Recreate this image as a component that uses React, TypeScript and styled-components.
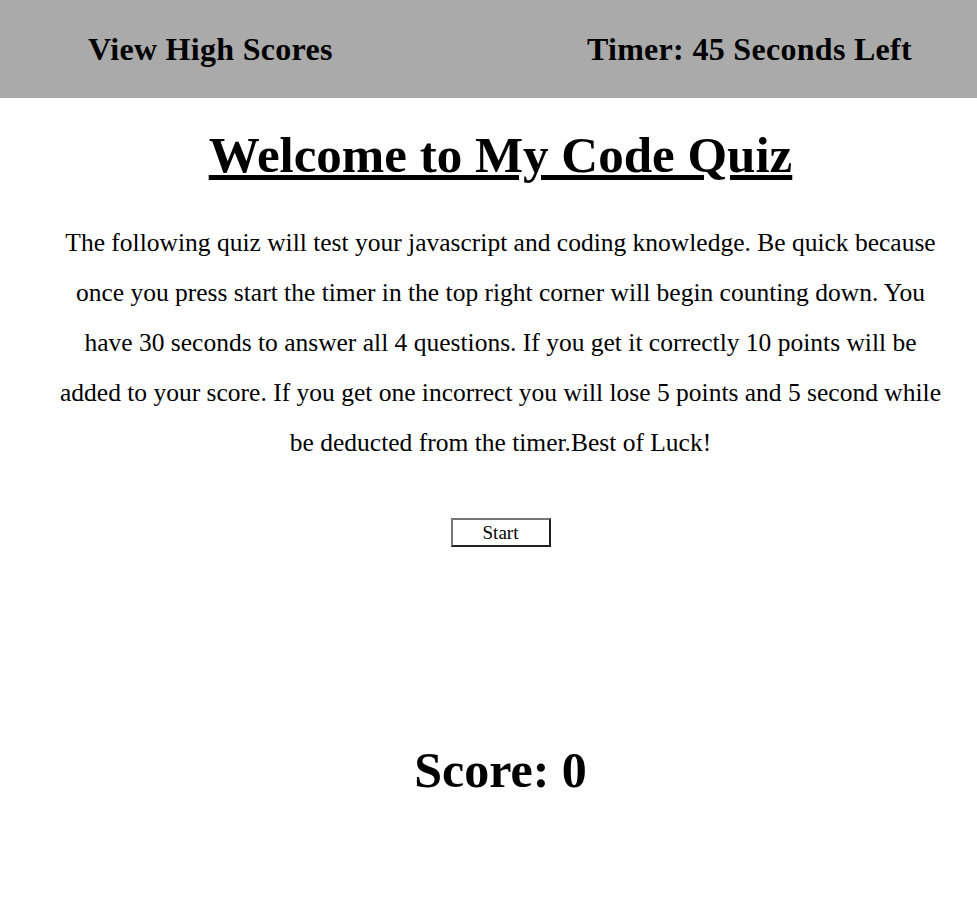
import React from "react";
import styled, { createGlobalStyle } from "styled-components";

const GlobalStyle = createGlobalStyle`
  html, body {
    margin: 0;
    padding: 0;
    background: #fff;
    font-family: "Liberation Serif", "Times New Roman", serif;
    color: #000;
  }
`;

const Header = styled.header`
  display: flex;
  justify-content: space-between;
  align-items: center;
  height: 98px;
  padding: 0 65px 0 88px;
  box-sizing: border-box;
  background-color: #aaaaaa;
`;

const HeaderText = styled.h2`
  margin: 0;
  font-size: 32px;
  letter-spacing: 0.3px;
  font-weight: bold;
`;

const Main = styled.main`
  display: flex;
  flex-direction: column;
  align-items: center;
  padding: 28px 22px 0 46px;
`;

const Title = styled.h1`
  margin: 0;
  font-size: 51px;
  font-weight: bold;
  text-decoration: underline;
  line-height: 58px;
`;

const Intro = styled.p`
  margin: 34px 0 0;
  max-width: 898px;
  font-size: 25.5px;
  line-height: 50px;
  text-align: center;
`;

const StartButton = styled.button`
  margin-top: 50px;
  width: 100px;
  height: 29px;
  font-family: "Liberation Serif", "Times New Roman", serif;
  font-size: 19px;
  background: #fff;
  border: 2px outset #767676;
  padding: 0;
`;

const Score = styled.h2`
  margin: 194px 0 0;
  font-size: 50px;
  font-weight: bold;
`;

export default function App() {
  return (
    <>
      <GlobalStyle />
      <Header>
        <HeaderText>View High Scores</HeaderText>
        <HeaderText>Timer: 45 Seconds Left</HeaderText>
      </Header>
      <Main>
        <Title>Welcome to My Code Quiz</Title>
        <Intro>
          The following quiz will test your javascript and coding knowledge. Be
          quick because once you press start the timer in the top right corner
          will begin counting down. You have 30 seconds to answer all 4
          questions. If you get it correctly 10 points will be added to your
          score. If you get one incorrect you will lose 5 points and 5 second
          while be deducted from the timer.Best of Luck!
        </Intro>
        <StartButton>Start</StartButton>
        <Score>Score: 0</Score>
      </Main>
    </>
  );
}
